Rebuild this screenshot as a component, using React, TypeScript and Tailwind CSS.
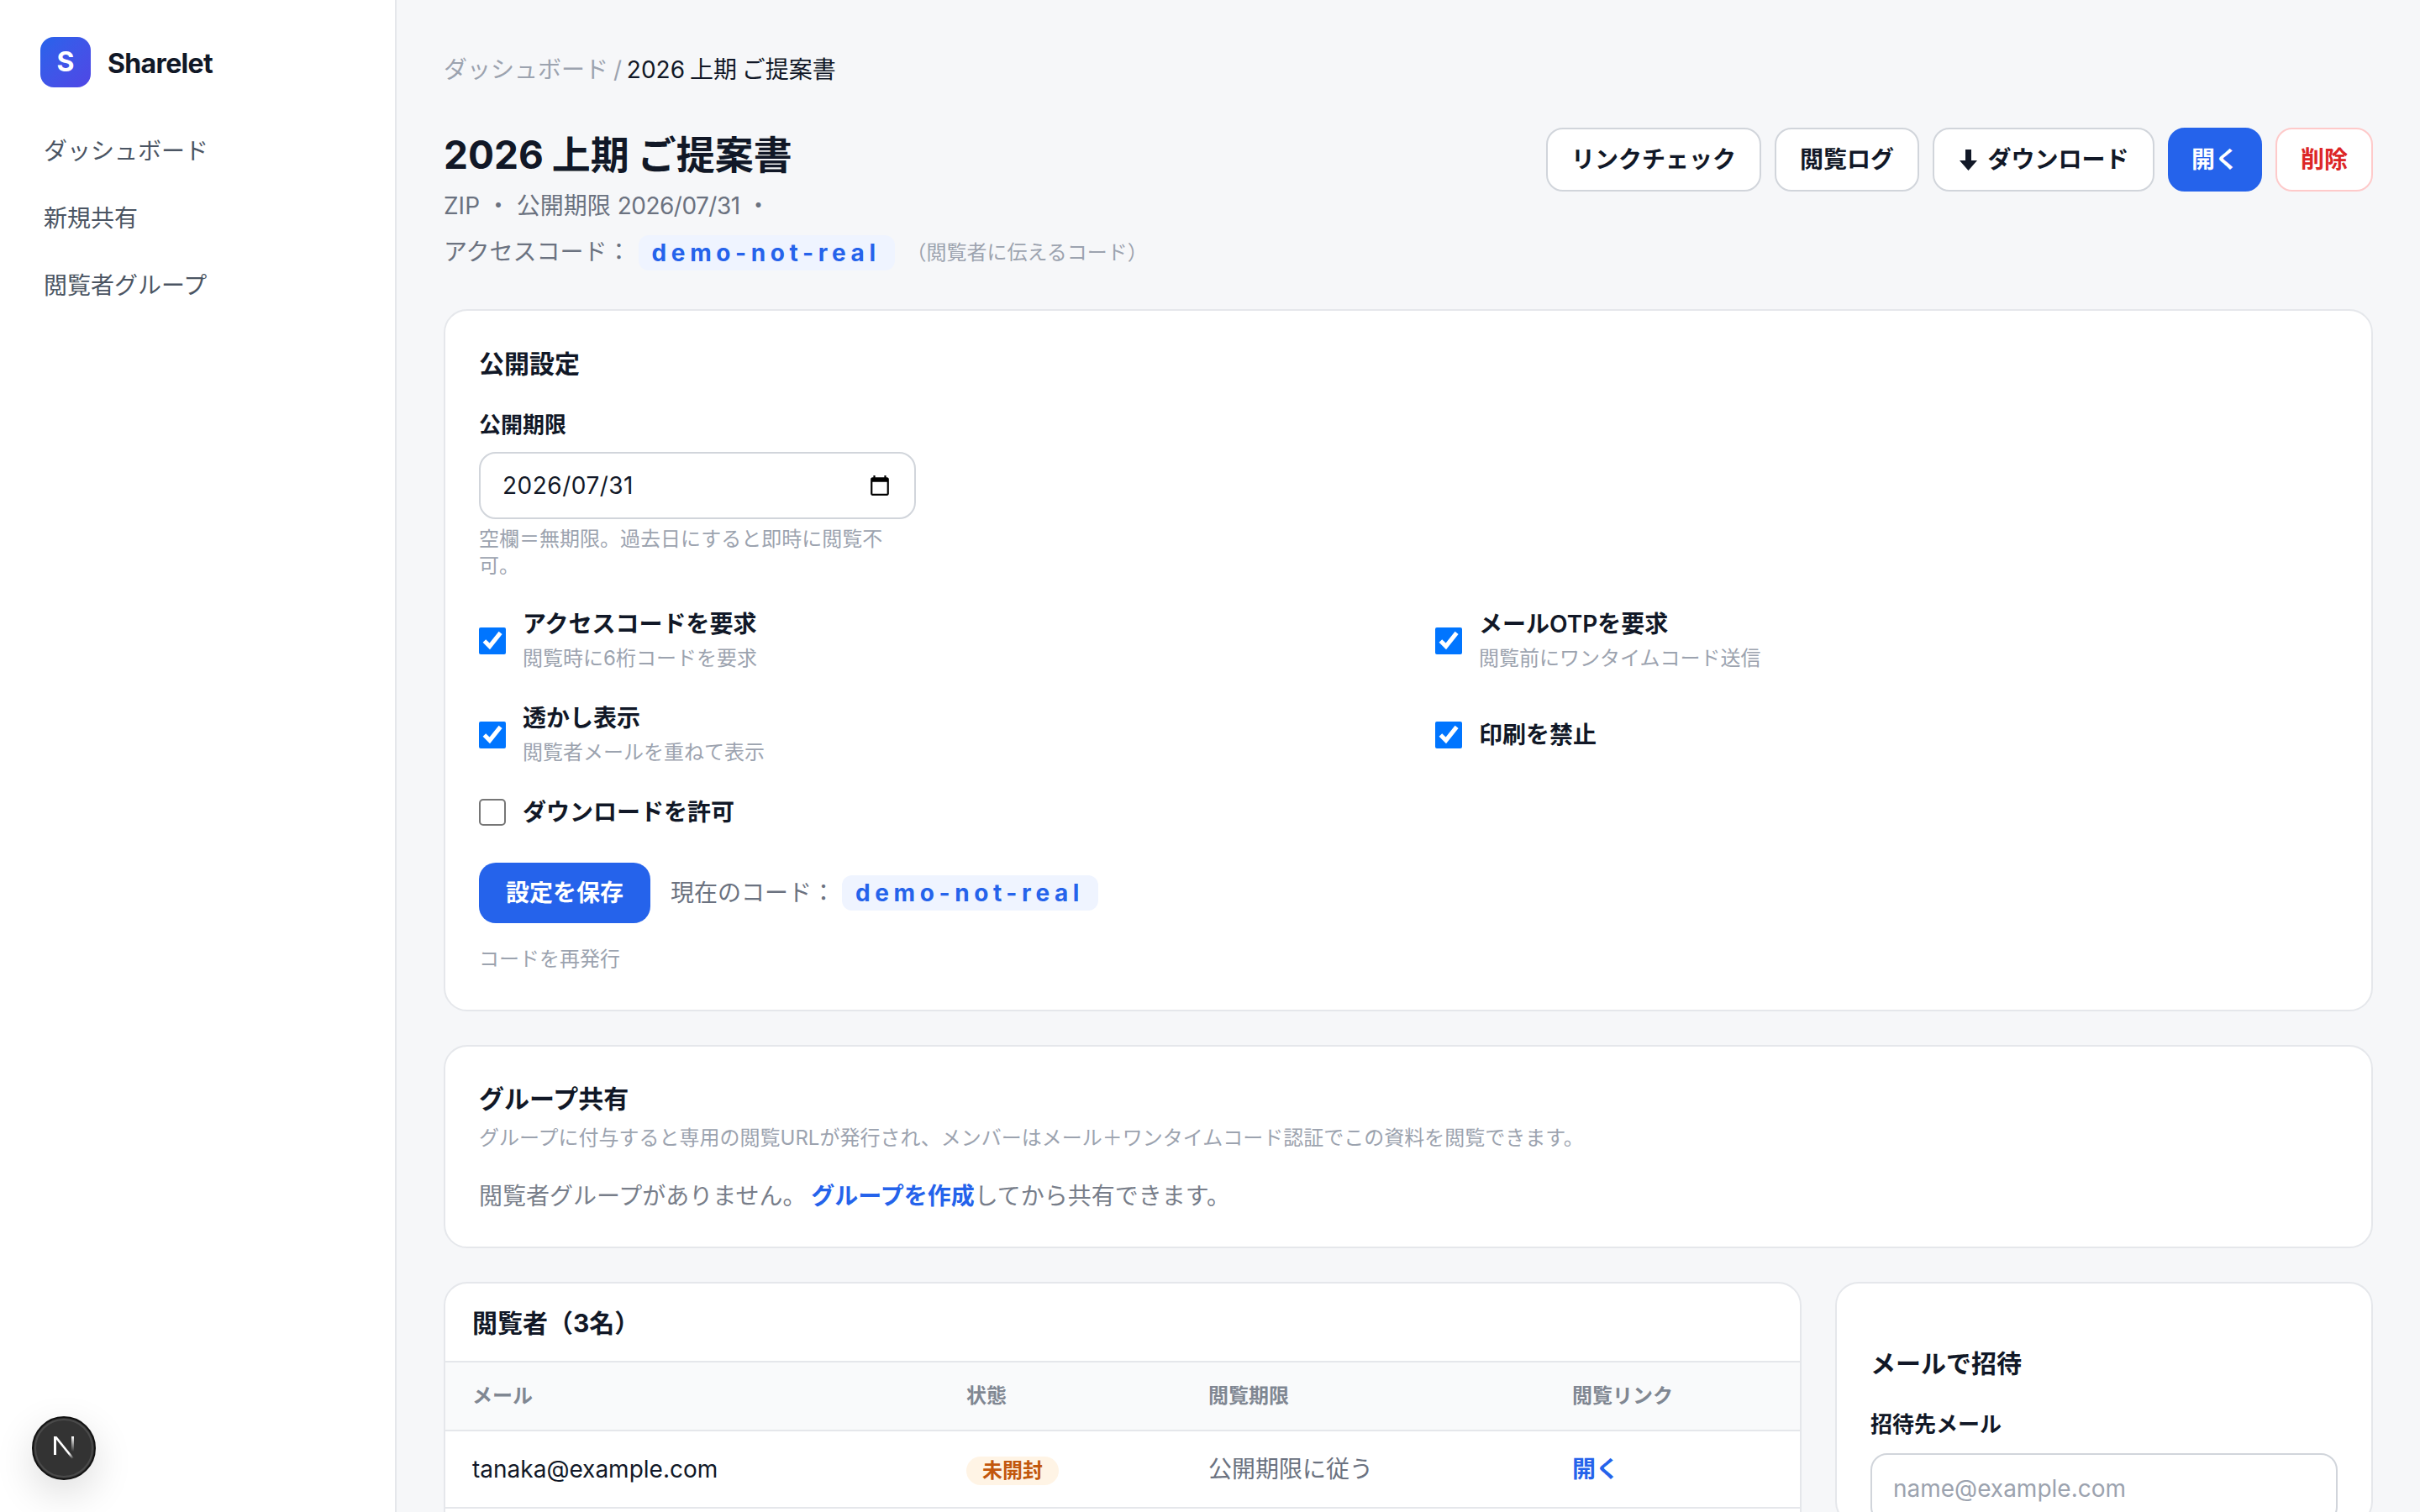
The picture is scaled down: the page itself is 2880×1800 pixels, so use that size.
const Chip = ({ className }: { className: string }) => (
  <span
    className={`inline-flex h-[42px] items-center rounded-[12px] bg-[#eff4ff] pr-[17px] pl-[16px] text-[28px] font-bold tracking-[5.6px] text-[#2563eb] ${className}`}
  >
    demo-not-real
  </span>
);

const Option = ({
  label,
  sub,
  checked = true,
}: {
  label: string;
  sub?: string;
  checked?: boolean;
}) => (
  <label className="flex items-center gap-[20px]">
    {checked ? (
      <input type="checkbox" defaultChecked className="h-[32px] w-[32px] shrink-0" />
    ) : (
      <input
        type="checkbox"
        className="h-[32px] w-[32px] shrink-0 appearance-none rounded-[5px] border-2 border-[#767676] bg-white"
      />
    )}
    <span>
      <span className="block text-[28px] leading-[40px] font-semibold text-[#111827]">{label}</span>
      {sub && <span className="mt-[3px] mb-[1px] block text-[24px] leading-[36px] text-[#9ca3af]">{sub}</span>}
    </span>
  </label>
);

const HeaderButton = ({ children, className }: { children: React.ReactNode; className: string }) => (
  <button
    type="button"
    className={`flex h-[76px] items-center justify-center rounded-[20px] border-2 text-[28px] font-semibold ${className}`}
  >
    {children}
  </button>
);

const NextBadge = () => (
  <div className="absolute bottom-[38px] left-[38px] flex h-[76px] w-[76px] items-center justify-center rounded-full border-2 border-[#111111] bg-[#333333] shadow-[0_16px_48px_rgba(0,0,0,0.14)]">
    <div className="absolute inset-[1px] rounded-full border-2 border-[#4a4a4a]" />
    <svg className="ml-[2px]" width="26" height="28" viewBox="0 0 26 28" fill="none">
      <defs>
        <linearGradient id="nd" x1="8" y1="6" x2="22" y2="27" gradientUnits="userSpaceOnUse">
          <stop stopColor="#fff" />
          <stop offset="0.7" stopColor="#fff" />
          <stop offset="1" stopColor="#fff" stopOpacity="0" />
        </linearGradient>
        <linearGradient id="nr" x1="22" y1="0" x2="22" y2="18" gradientUnits="userSpaceOnUse">
          <stop stopColor="#fff" />
          <stop offset="1" stopColor="#fff" stopOpacity="0" />
        </linearGradient>
      </defs>
      <path d="M0 0h3v22H0z" fill="#fff" />
      <path d="M0 0h3.4L25 27l-2.4 1z" fill="url(#nd)" />
      <path d="M21 0h3v18h-3z" fill="url(#nr)" />
    </svg>
  </div>
);

export default function App() {
  return (
    <div className="relative flex h-screen overflow-hidden bg-[#f6f7f9] font-['Inter','Noto_Sans_CJK_JP',sans-serif] text-[#111827]">
      <aside className="w-[472px] shrink-0 border-r-2 border-[#e5e7eb] bg-white px-[48px] pt-[44px]">
        <div className="flex items-center gap-[20px]">
          <div className="flex h-[60px] w-[60px] items-center justify-center rounded-[16px] bg-gradient-to-br from-[#2563eb] to-[#4f46e5] text-[32px] font-bold text-white">
            S
          </div>
          <span className="pt-[3px] text-[32px] font-bold tracking-[-0.02em]">Sharelet</span>
        </div>
        <nav className="mt-[55px] flex flex-col gap-[38px] pl-[4px] text-[28px] leading-[42px] text-[#4b5563]">
          <a>ダッシュボード</a>
          <a>新規共有</a>
          <a>閲覧者グループ</a>
        </nav>
      </aside>

      <main className="min-w-0 flex-1 px-[56px] pt-[62px]">
        <div className="mb-[48px] text-[28px] leading-[42px] text-[#9ca3af] [word-spacing:-2px]">
          ダッシュボード / <span className="text-[#111827]">2026 上期 ご提案書</span>
        </div>

        <header className="mb-[46px] flex items-start justify-between">
          <div>
            <h1 className="text-[46px] leading-[64px] font-bold [word-spacing:-1px]">2026 上期 ご提案書</h1>
            <p className="mt-[8px] text-[28px] leading-[42px] text-[#6b7280]">
              ZIP ・ 公開期限 <span className="tracking-[-0.5px]">2026/07/31</span> ・
            </p>
            <div className="mt-[14px] flex h-[42px] items-center text-[28px] text-[#6b7280]">
              <span className="pb-[2px]">アクセスコード：</span>
              <Chip className="ml-[9px]" />
              <span className="ml-[14px] text-[24px] text-[#9ca3af]">（閲覧者に伝えるコード）</span>
            </div>
          </div>
          <div className="flex gap-[16px]">
            <HeaderButton className="w-[256px] border-[#d1d5db] bg-white">リンクチェック</HeaderButton>
            <HeaderButton className="w-[172px] border-[#d1d5db] bg-white">閲覧ログ</HeaderButton>
            <HeaderButton className="w-[264px] gap-[12px] border-[#d1d5db] bg-white pl-[2px]">
              <svg width="21" height="25" viewBox="0 0 21 25" fill="#111827">
                <path d="M7 0h7v13h7L10.5 25 0 13h7z" />
              </svg>
              ダウンロード
            </HeaderButton>
            <HeaderButton className="w-[112px] border-[#2563eb] bg-[#2563eb] text-white">開く</HeaderButton>
            <HeaderButton className="w-[116px] border-[#fecaca] bg-white text-[#dc2626]">削除</HeaderButton>
          </div>
        </header>

        <section className="mb-[40px] rounded-[28px] border-2 border-[#e5e7eb] bg-white px-[40px] pt-[40px] pb-[42px]">
          <h2 className="text-[30px] leading-[46px] font-bold">公開設定</h2>
          <div className="mt-[30px] text-[26px] leading-[40px] font-semibold">公開期限</div>
          <div className="mt-[12px] flex h-[80px] w-[520px] items-center justify-between rounded-[20px] border-2 border-[#d1d5db] bg-white pr-[28px] pl-[26px] text-[28px]">
            <span className="tracking-[0.5px]">2026/07/31</span>
            <svg width="26" height="26" viewBox="0 0 24 24" fill="#000">
              <path d="M20 3h-1V1h-2v2H7V1H5v2H4c-1.1 0-2 .9-2 2v16c0 1.1.9 2 2 2h16c1.1 0 2-.9 2-2V5c0-1.1-.9-2-2-2zm0 18H4V8h16v13z" />
            </svg>
          </div>
          <p className="mt-[8px] w-[520px] text-[24px] leading-[32px] text-[#9ca3af]">
            空欄＝無期限。過去日にすると即時に閲覧不可。
          </p>

          <div className="mt-[33px] grid grid-cols-2 gap-x-[64px] gap-y-[32px]">
            <Option label="アクセスコードを要求" sub="閲覧時に6桁コードを要求" />
            <Option label="メールOTPを要求" sub="閲覧前にワンタイムコード送信" />
            <Option label="透かし表示" sub="閲覧者メールを重ねて表示" />
            <Option label="印刷を禁止" />
            <Option label="ダウンロードを許可" checked={false} />
          </div>

          <div className="mt-[40px] flex items-center">
            <button
              type="button"
              className="h-[72px] w-[204px] rounded-[20px] bg-[#2563eb] text-[28px] font-semibold text-white"
            >
              設定を保存
            </button>
            <span className="ml-[24px] text-[28px] text-[#6b7280]">現在のコード：</span>
            <Chip className="ml-[8px]" />
          </div>
          <div className="mt-[25px] text-[24px] leading-[36px] text-[#9ca3af]">コードを再発行</div>
        </section>

        <section className="mb-[40px] h-[242px] rounded-[28px] border-2 border-[#e5e7eb] bg-white px-[40px] pt-[40px]">
          <h2 className="text-[30px] leading-[44px] font-bold">グループ共有</h2>
          <p className="mt-[7px] text-[24px] leading-[36px] text-[#9ca3af]">
            グループに付与すると専用の閲覧URLが発行され、メンバーはメール＋ワンタイムコード認証でこの資料を閲覧できます。
          </p>
          <p className="mt-[30px] text-[28px] leading-[42px] text-[#787e8a] [word-spacing:-2px]">
            閲覧者グループがありません。 <a className="font-semibold text-[#2563eb]">グループを作成</a>
            してから共有できます。
          </p>
        </section>

        <div className="flex items-start gap-[40px]">
          <section className="min-h-[400px] min-w-0 flex-1 rounded-[28px] border-2 border-[#e5e7eb] bg-white">
            <h2 className="flex h-[92px] items-center px-[32px] pt-[2px] text-[30px] font-bold">閲覧者（3名）</h2>
            <table className="w-full table-fixed">
              <thead className="border-y-2 border-[#e5e7eb] bg-[#f9fafb]">
                <tr className="h-[82px] text-left text-[24px] text-[#808792]">
                  <th className="w-[620px] pl-[32px] font-semibold">メール</th>
                  <th className="w-[288px] font-semibold">状態</th>
                  <th className="w-[433px] font-semibold">閲覧期限</th>
                  <th className="font-semibold">閲覧リンク</th>
                </tr>
              </thead>
              <tbody>
                <tr className="h-[92px] border-b-2 border-[#e5e7eb] text-[28px]">
                  <td className="pl-[32px]">tanaka@example.com</td>
                  <td>
                    <span className="inline-flex h-[34px] w-[110px] items-center justify-center rounded-full bg-[#fff4e5] text-[24px] font-semibold text-[#c2570c]">
                      未開封
                    </span>
                  </td>
                  <td className="text-[#6b7280]">公開期限に従う</td>
                  <td>
                    <a className="font-semibold text-[#2563eb]">開く</a>
                  </td>
                </tr>
              </tbody>
            </table>
          </section>

          <section className="w-[640px] shrink-0 rounded-[28px] border-2 border-[#e5e7eb] bg-white px-[40px] pt-[72px]">
            <h2 className="text-[30px] leading-[46px] font-bold">メールで招待</h2>
            <label className="mt-[30px] block text-[26px] leading-[40px] font-semibold">招待先メール</label>
            <input
              placeholder="name@example.com"
              className="mt-[14px] h-[84px] w-full rounded-[20px] border-2 border-[#d1d5db] px-[25px] text-[28px] outline-none placeholder:text-[#9ca3af]"
            />
          </section>
        </div>
      </main>

      <NextBadge />
    </div>
  );
}
